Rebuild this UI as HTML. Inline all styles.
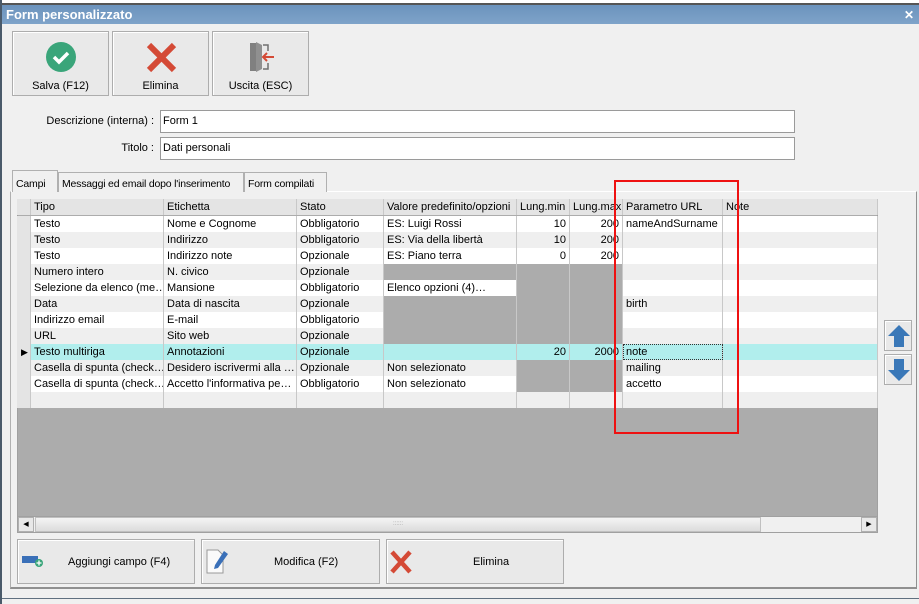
<!DOCTYPE html>
<html><head><meta charset="utf-8"><style>
*{box-sizing:border-box;margin:0;padding:0}
body{width:919px;height:604px;overflow:hidden;background:#f0f0f0;font-family:"Liberation Sans",sans-serif;font-size:11px;color:#000;position:relative}
.a{position:absolute}
.btn{position:absolute;background:#e9e9e9;border:1px solid #adadad;box-shadow:inset 1px 1px 0 #fff;text-align:center;font-size:11px}
.inp{position:absolute;background:#fff;border:1px solid #9a9a9a;padding:4px 2px;font-size:11px}
.lbl{position:absolute;font-size:11px;text-align:right}
.tab{position:absolute;top:172px;height:20px;border:1px solid #b0b0b0;border-bottom:none;background:#f0f0f0;padding:5px 3px 0;font-size:10.5px;letter-spacing:-0.2px;white-space:nowrap;overflow:hidden}
.row{position:absolute;left:17px;width:861px;height:16px}
.c{position:absolute;top:0;height:16px;line-height:17px;padding-left:3px;white-space:nowrap;overflow:hidden;border-right:1px solid #c8c8c8}
.r{text-align:right;padding-right:3px}
</style></head><body>
<div class="a" style="left:0;top:0;width:919px;height:5px;background:#fff"></div>
<div class="a" style="left:0;top:3px;width:919px;height:2px;background:#555"></div>
<div class="a" style="left:0;top:0;width:2px;height:604px;background:#4a5a6a"></div>
<div class="a" style="left:2px;top:5px;width:917px;height:19px;background:linear-gradient(#6b93bd,#7ea3c9);color:#fff;font-weight:bold;font-size:13px;line-height:20px;padding-left:4px">Form personalizzato</div>
<div class="a" style="left:903px;top:9px;width:12px;height:12px;color:#fff;font-weight:bold;font-size:12px;line-height:12px;text-align:center">✕</div>

<div class="btn" style="left:12px;top:31px;width:97px;height:65px">
<svg class="a" style="left:33px;top:10px" width="30" height="30"><circle cx="15" cy="15" r="15" fill="#3aa57a"/><path d="M8 15l5 5 9-9" stroke="#fff" stroke-width="3.5" fill="none"/></svg>
<div class="a" style="left:0;right:0;top:48px">Salva (F12)</div></div>
<div class="btn" style="left:112px;top:31px;width:97px;height:65px">
<svg class="a" style="left:33px;top:10px" width="31" height="31"><path d="M3 3L28 28M28 3L3 28" stroke="#d44a36" stroke-width="6"/></svg>
<div class="a" style="left:0;right:0;top:48px">Elimina</div></div>
<div class="btn" style="left:212px;top:31px;width:97px;height:65px">
<svg class="a" style="left:34px;top:10px" width="30" height="30"><path d="M3 1h6v28H3z" fill="#808080"/><path d="M9 0l6 3v24l-6 3z" fill="#909090"/><path d="M16 3h5v6M21 21v6h-5" stroke="#707070" stroke-width="1.5" fill="none"/><path d="M27 15H16M20 11l-4 4 4 4" stroke="#d44a36" stroke-width="2" fill="none"/></svg>
<div class="a" style="left:0;right:0;top:48px">Uscita (ESC)</div></div>

<div class="lbl" style="left:20px;top:115px;width:134px">Descrizione (interna) :</div>
<div class="inp" style="left:160px;top:110px;width:635px;height:23px">Form 1</div>
<div class="lbl" style="left:20px;top:142px;width:134px">Titolo :</div>
<div class="inp" style="left:160px;top:137px;width:635px;height:23px">Dati personali</div>

<div class="a" style="left:10px;top:191px;width:907px;height:398px;border:1px solid #b0b0b0;border-top-color:#fff;border-right-color:#909090;border-bottom-color:#909090;border-bottom-width:2px"></div>
<div class="tab" style="left:12px;width:46px;top:170px;height:22px;background:#f0f0f0;z-index:2;padding-top:7px">Campi</div>
<div class="tab" style="left:58px;width:186px">Messaggi ed email dopo l'inserimento</div>
<div class="tab" style="left:244px;width:83px">Form compilati</div>

<div class="a" style="left:17px;top:199px;width:861px;height:334px;background:#acacac;border:1px solid #a0a0a0"></div>
<div id="grid"></div>
<script>
var cols=[[17,14],[31,133],[164,133],[297,87],[384,133],[517,53],[570,53],[623,100],[723,155]];
var hdr=["","Tipo","Etichetta","Stato","Valore predefinito/opzioni","Lung.min","Lung.max","Parametro URL","Note"];
var rows=[
["Testo","Nome e Cognome","Obbligatorio","ES: Luigi Rossi","10","200","nameAndSurname",""],
["Testo","Indirizzo","Obbligatorio","ES: Via della libertà","10","200","",""],
["Testo","Indirizzo note","Opzionale","ES: Piano terra","0","200","",""],
["Numero intero","N. civico","Opzionale","#","#","#","",""],
["Selezione da elenco (me…","Mansione","Obbligatorio","Elenco opzioni (4)…","#","#","",""],
["Data","Data di nascita","Opzionale","#","#","#","birth",""],
["Indirizzo email","E-mail","Obbligatorio","#","#","#","",""],
["URL","Sito web","Opzionale","#","#","#","",""],
["Testo multiriga","Annotazioni","Opzionale","","20","2000","note",""],
["Casella di spunta (check…","Desidero iscrivermi alla …","Opzionale","Non selezionato","#","#","mailing",""],
["Casella di spunta (check…","Accetto l'informativa pe…","Obbligatorio","Non selezionato","#","#","accetto",""],
["","","","","","","",""]];
var h='';
function row(y,cells,bg,isH,sel){
 h+='<div class="row" style="top:'+y+'px">';
 for(var i=0;i<cols.length;i++){
  var v=i==0?'':cells[i-1];var b=bg;var cls='c';
  if(i==0){b='#e4e4e4';}
  if(isH)b='#e4e4e4';
  if(v=='#'){v='';b='#acacac';}
  if(!isH&&(i==5||i==6))cls+=' r';
  var ex='';
  if(sel&&i==0)v='<span style="font-size:9px;padding-left:1px">&#9654;</span>';
  if(sel&&i==7)ex='outline:1px dotted #333;outline-offset:-1px;';
  h+='<div class="'+cls+'" style="left:'+(cols[i][0]-17)+'px;width:'+cols[i][1]+'px;background:'+b+';'+ex+'">'+v+'</div>';
 }
 h+='</div>';
}
row(199,hdr.slice(1),'#e4e4e4',true,false);
for(var k=0;k<rows.length;k++){
 var bg=k==8?'#b1eeed':(k%2==0?'#fff':'#efefef');
 row(216+k*16,rows[k],bg,false,k==8);
}
document.getElementById('grid').innerHTML=h;
</script>
<div class="a" style="left:17px;top:516px;width:861px;height:17px;background:#f0f0f0;border:1px solid #a0a0a0"></div>
<div class="a" style="left:18px;top:517px;width:16px;height:15px;background:#e8e8e8;border:1px solid #b0b0b0;font-size:7px;line-height:13px;text-align:center">&#9664;</div>
<div class="a" style="left:35px;top:517px;width:726px;height:15px;background:linear-gradient(#f4f4f4,#dcdcdc);border:1px solid #c0c0c0;text-align:center;font-size:6px;color:#999;line-height:13px">::::::</div>
<div class="a" style="left:861px;top:517px;width:16px;height:15px;background:#e8e8e8;border:1px solid #b0b0b0;font-size:7px;line-height:13px;text-align:center">&#9654;</div>

<div class="btn" style="left:884px;top:320px;width:28px;height:31px"><svg class="a" style="left:2px;top:3px" width="24" height="24"><path d="M12 1L23 12H17V23H7V12H1Z" fill="#3a78b8"/></svg></div>
<div class="btn" style="left:884px;top:354px;width:28px;height:31px"><svg class="a" style="left:2px;top:3px" width="24" height="24"><path d="M12 23L23 12H17V1H7V12H1Z" fill="#3a78b8"/></svg></div>

<div class="btn" style="left:17px;top:539px;width:178px;height:45px">
<svg class="a" style="left:3px;top:14px" width="24" height="14"><rect x="1" y="2" width="16" height="7" fill="#3a70b8"/><circle cx="18" cy="9" r="4" fill="#3aa57a"/><path d="M18 6.5v5M15.5 9h5" stroke="#fff" stroke-width="1.3"/></svg>
<div class="a" style="left:50px;top:16px">Aggiungi campo (F4)</div></div>
<div class="btn" style="left:201px;top:539px;width:179px;height:45px">
<svg class="a" style="left:3px;top:8px" width="26" height="28"><path d="M2 2h11l5 5v18H2z" fill="#fafafa" stroke="#999"/><path d="M19 3l4 3-10 14-4 1 1-4z" fill="#3a70b8"/></svg>
<div class="a" style="left:72px;top:16px">Modifica (F2)</div></div>
<div class="btn" style="left:386px;top:539px;width:178px;height:45px">
<svg class="a" style="left:2px;top:10px" width="24" height="24"><path d="M3 2L21 22M21 2L3 22" stroke="#d44a36" stroke-width="4.5"/></svg>
<div class="a" style="left:86px;top:16px">Elimina</div></div>

<div class="a" style="left:2px;top:598px;width:917px;height:1px;background:#607080"></div>
<div class="a" style="left:614px;top:180px;width:125px;height:254px;border:2px solid #ee1111"></div>
</body></html>
